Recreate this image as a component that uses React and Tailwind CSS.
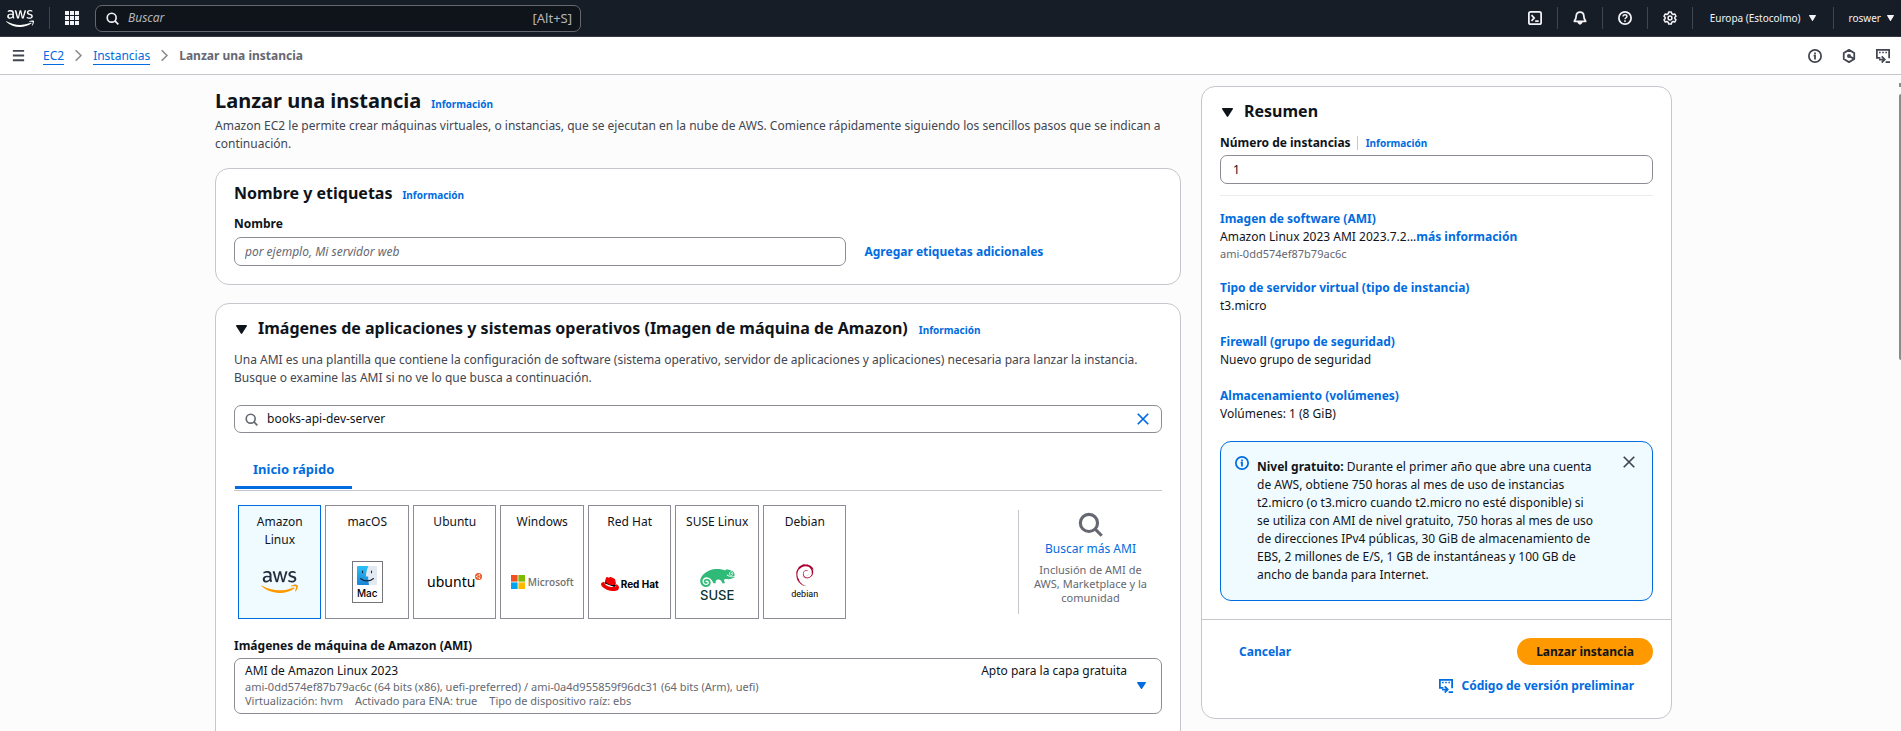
import React from "react";
import { FaAws, FaRedhat, FaSuse } from "react-icons/fa";
import { SiDebian } from "react-icons/si";

/* ---------- icons ---------- */

function Icon({ size = "size-[14px]", width = 2, children, className = "" }) {
  return (
    <svg
      viewBox="0 0 16 16"
      fill="none"
      stroke="currentColor"
      strokeWidth={width}
      aria-hidden="true"
      className={`${size} shrink-0 ${className}`}
    >
      {children}
    </svg>
  );
}

const SearchIcon = (props) => (
  <Icon {...props}>
    <circle cx="7" cy="7" r="5.5" />
    <path d="M11 11l4.2 4.2" />
  </Icon>
);

const CloseIcon = (props) => (
  <Icon {...props}>
    <path d="M2 2l12 12M14 2L2 14" />
  </Icon>
);

const InfoIcon = (props) => (
  <Icon {...props}>
    <circle cx="8" cy="8" r="7" />
    <path d="M6.500 7.500H8V12M8 6V4" />
  </Icon>
);

const ChevronIcon = (props) => (
  <Icon {...props}>
    <path d="M4.500 1.500L11 8l-6.500 6.500" />
  </Icon>
);

const MenuIcon = (props) => (
  <Icon {...props}>
    <path d="M2 3h12M2 8h12M2 13h12" />
  </Icon>
);

const TerminalIcon = (props) => (
  <Icon {...props}>
    <rect x="1" y="1" width="14" height="14" rx="2" />
    <path d="M4 4.8L7 8l-3 3.2M8.2 11.5h4" />
  </Icon>
);

const BellIcon = (props) => (
  <Icon {...props}>
    <path d="M8 1.2c-2.6 0-4.3 1.9-4.3 4.3 0 3-.7 4.3-2.2 6.3h13c-1.5-2-2.2-3.3-2.2-6.3 0-2.4-1.7-4.3-4.3-4.3z" strokeLinejoin="round" />
    <path d="M5.6 12.6c.2 1.600 1.100 2.400 2.400 2.400s2.200-.8 2.400-2.400z" fill="currentColor" strokeWidth="1" />
  </Icon>
);

const HelpIcon = (props) => (
  <Icon {...props}>
    <circle cx="8" cy="8" r="7" />
    <path d="M5.800 6.400c0-1.300 1-2.200 2.200-2.200s2.200.8 2.200 2c0 1.500-2.200 1.600-2.200 3.300M8 10.600v2" strokeWidth="1.700" />
  </Icon>
);

const GearIcon = (props) => (
  <Icon {...props}>
    <path
      d="M6.500 1.200h3l.5 1.900 1.500.9 1.900-.6 1.500 2.600L13.500 7.300v1.400l1.400 1.300-1.500 2.600-1.900-.6-1.500.9-.5 1.900h-3L6 12.900 4.500 12l-1.900.6L1.100 10l1.400-1.300V7.300L1.100 6l1.500-2.600 1.900.6L6 3.100z"
      strokeLinejoin="round"
      strokeWidth="1.700"
    />
    <circle cx="8" cy="8" r="2.200" strokeWidth="1.700" />
  </Icon>
);

const HexagonIcon = (props) => (
  <Icon {...props}>
    <path d="M8 1l6 3.500v7L8 15l-6-3.500v-7z" strokeLinejoin="round" />
    <circle cx="8" cy="8" r="1.300" />
    <path d="M9 8.600l4.500 2.400" />
  </Icon>
);

const ScriptIcon = (props) => (
  <Icon {...props}>
    <path d="M5 10H1V1h14v9.500" />
    <path d="M3.500 4h1.800M7.100 4h1.800M10.700 4h1.800" strokeWidth="1.600" />
    <path d="M3.500 12H9M6.500 8.500L10 12l-3.500 3.500M11 15h5" />
  </Icon>
);

function Caret({ className = "h-[9px] w-[11px]" }) {
  return (
    <svg viewBox="0 0 12 9" preserveAspectRatio="none" fill="currentColor" aria-hidden="true" className={`shrink-0 ${className}`}>
      <path d="M.8 0h10.400c.7 0 1 .7.6 1.200L6.700 8.600c-.3.5-1.100.5-1.400 0L.2 1.200C-.2.7.1 0 .8 0z" />
    </svg>
  );
}

const AppsIcon = () => (
  <svg viewBox="0 0 14 14" fill="currentColor" aria-hidden="true" className="size-[14px]">
    {[0, 5, 10].map((y) => [0, 5, 10].map((x) => <rect key={`${x}-${y}`} x={x} y={y} width="4" height="4" />))}
  </svg>
);

/* ---------- vendor logos ---------- */

const AmazonLogo = () => (
  <>
    <svg width="0" height="0" className="absolute" aria-hidden="true">
      <linearGradient id="aws-fill" gradientUnits="userSpaceOnUse" x1="0" y1="64" x2="0" y2="448">
        <stop offset=".64" stopColor="#232f3e" />
        <stop offset=".64" stopColor="#ff9900" />
      </linearGradient>
    </svg>
    <FaAws viewBox="0 64 640 384" fill="url(#aws-fill)" stroke="none" className="h-[22px] w-[37px]" />
  </>
);

const MacLogo = () => (
  <span className="flex h-[42px] w-[31px] flex-col items-center border border-[#75757a] bg-white pt-1">
    <svg viewBox="0 0 20 19" className="h-[19px] w-5" aria-hidden="true">
      <defs>
        <linearGradient id="mac-blue" x1="0" y1="0" x2="0" y2="1">
          <stop offset="0" stopColor="#2cc0f6" />
          <stop offset="1" stopColor="#1785d6" />
        </linearGradient>
      </defs>
      <rect width="20" height="19" rx="1" fill="#e3e8f1" />
      <path d="M1 0h10.500C9.800 3.500 9 6.800 8.900 10.500h2.300c-.1 3 .2 5.800.8 8.500H1a1 1 0 0 1-1-1V1a1 1 0 0 1 1-1z" fill="url(#mac-blue)" />
      <path d="M5.500 5v1.800M14.500 5v1.800M3.500 12.500c3.600 3.200 9.400 3.200 13 0" fill="none" stroke="#1b2a3c" strokeWidth="1.100" strokeLinecap="round" />
    </svg>
    <span className="font-['Inter',sans-serif] text-[10px] leading-[16px] font-medium text-black">Mac</span>
  </span>
);

const UbuntuLogo = () => (
  <span className="flex items-start">
    <span className="font-['Noto_Sans',sans-serif] text-[14px] leading-[18px] text-black">ubuntu</span>
    <svg viewBox="0 0 14 14" className="size-[7px]" aria-hidden="true">
      <circle cx="7" cy="7" r="7" fill="#e95420" />
      <circle cx="7" cy="7" r="3" fill="none" stroke="#fff" strokeWidth="1.300" />
      <circle cx="2.800" cy="7" r="1.200" fill="#fff" />
      <circle cx="9.200" cy="3.300" r="1.200" fill="#fff" />
      <circle cx="9.200" cy="10.700" r="1.200" fill="#fff" />
    </svg>
  </span>
);

const MicrosoftLogo = () => (
  <span className="flex items-center gap-[3px]">
    <svg viewBox="0 0 14 14" className="size-[14px] shrink-0" aria-hidden="true">
      <rect width="6.600" height="6.600" fill="#f25022" />
      <rect x="7.400" width="6.600" height="6.600" fill="#7fba00" />
      <rect y="7.400" width="6.600" height="6.600" fill="#00a4ef" />
      <rect x="7.400" y="7.400" width="6.600" height="6.600" fill="#ffb900" />
    </svg>
    <span className="font-['Open_Sans',sans-serif] text-[10px] leading-[14px] font-semibold text-[#737373]">Microsoft</span>
  </span>
);

const RedHatLogo = () => (
  <span className="flex items-center gap-[2px] pt-1">
    <span className="relative flex">
      <svg viewBox="0 0 18 14" className="absolute inset-0 h-[14px] w-[18px]" aria-hidden="true">
        <path d="M4 6l9.500 3.500 1-1.500L5 4.500z" fill="#000" stroke="#000" />
      </svg>
      <FaRedhat viewBox="0 64 512 384" preserveAspectRatio="none" className="relative h-[14px] w-[18px] text-[#ee0000]" />
    </span>
    <span className="font-['Inter',sans-serif] text-[10px] leading-[14px] font-bold text-black">Red Hat</span>
  </span>
);

const SuseLogo = () => (
  <span className="flex flex-col items-center pt-2">
    <FaSuse viewBox="0 96 640 320" preserveAspectRatio="none" className="h-[18px] w-[35px] text-[#30ba78]" />
    <span className="font-['Inter',sans-serif] text-[13px] leading-[16px] font-medium text-[#0c322c]">SUSE</span>
  </span>
);

const DebianLogo = () => (
  <span className="flex flex-col items-center gap-px">
    <SiDebian className="h-[22px] w-[22px] text-[#a80030]" />
    <span className="font-['Roboto',sans-serif] text-[9px] leading-[14px] text-black">debian</span>
  </span>
);

const SYSTEMS = [
  { name: "Amazon Linux", Logo: AmazonLogo, selected: true },
  { name: "macOS", Logo: MacLogo },
  { name: "Ubuntu", Logo: UbuntuLogo },
  { name: "Windows", Logo: MicrosoftLogo },
  { name: "Red Hat", Logo: RedHatLogo },
  { name: "SUSE Linux", Logo: SuseLogo },
  { name: "Debian", Logo: DebianLogo },
];

/* ---------- shared pieces ---------- */

const InfoLink = () => (
  <a href="#info" className="text-[10px] leading-[12px] font-bold text-[#006ce0]">
    Información
  </a>
);

const Divider = () => <span className="h-[22px] w-px bg-[#424650]" />;

function TopBar() {
  return (
    <header className="flex h-[37px] items-center border-b border-[#333843] bg-[#161d26] text-[#f3f3f7]">
      <a href="#home" aria-label="AWS" className="ml-[6px]">
        <FaAws viewBox="0 64 640 384" className="h-[17px] w-[28px] text-white" />
      </a>
      <div className="ml-[15px] flex items-center gap-[15px]">
        <Divider />
        <button type="button" aria-label="Servicios">
          <AppsIcon />
        </button>
      </div>
      <label className="ml-4 flex h-[27px] w-[486px] items-center gap-[9px] rounded-[7px] border border-[#656871] bg-[#0f141a] pr-2 pl-[10px]">
        <SearchIcon size="size-[13px]" />
        <input
          type="search"
          aria-label="Buscar"
          placeholder="Buscar"
          className="min-w-0 flex-1 bg-transparent text-[12px] italic outline-none placeholder:text-[#b4b4bb]"
        />
        <span className="text-[13px] text-[#b4b4bb]">[Alt+S]</span>
      </label>
      <nav className="ml-auto flex items-center gap-[15px]">
        <button type="button" aria-label="CloudShell"><TerminalIcon /></button>
        <Divider />
        <button type="button" aria-label="Notificaciones"><BellIcon /></button>
        <Divider />
        <button type="button" aria-label="Ayuda"><HelpIcon /></button>
        <Divider />
        <button type="button" aria-label="Configuración"><GearIcon /></button>
        <Divider />
        <button type="button" className="flex items-center gap-2 px-[2px] text-[10px]">
          Europa (Estocolmo)
          <Caret className="h-[6px] w-[7px]" />
        </button>
        <Divider />
        <button type="button" className="mr-[7px] flex items-center gap-[6px] text-[10px]">
          roswer
          <Caret className="h-[6px] w-[7px]" />
        </button>
      </nav>
    </header>
  );
}

function BreadcrumbBar() {
  return (
    <div className="flex h-[38px] items-center border-b border-[#c6c6cd] bg-white px-[11px]">
      <button type="button" aria-label="Menú" className="text-[#424650]">
        <MenuIcon size="size-[15px]" />
      </button>
      <nav aria-label="Ruta" className="ml-[17px] flex items-center gap-2 text-[12px]">
        <a href="#ec2" className="border-b border-[#006ce0] leading-[17px] text-[#006ce0]">EC2</a>
        <ChevronIcon size="size-[13px]" className="text-[#8c8c94]" />
        <a href="#instancias" className="border-b border-[#006ce0] leading-[17px] text-[#006ce0]">Instancias</a>
        <ChevronIcon size="size-[13px]" className="text-[#8c8c94]" />
        <span className="font-bold text-[#656871]">Lanzar una instancia</span>
      </nav>
      <div className="ml-auto flex gap-5 text-[#424650]">
        <button type="button" aria-label="Información"><InfoIcon /></button>
        <button type="button" aria-label="Tutoriales"><HexagonIcon /></button>
        <button type="button" aria-label="Código"><ScriptIcon /></button>
      </div>
    </div>
  );
}

function NameCard() {
  return (
    <section className="rounded-[14px] border border-[#c6c6cd] bg-white px-[18px] pt-[13px] pb-[18px]">
      <div className="flex items-baseline gap-[10px]">
        <h2 className="text-[16px] leading-[22px] font-bold">Nombre y etiquetas</h2>
        <InfoLink />
      </div>
      <label htmlFor="nombre" className="mt-[11px] mb-1 block font-bold">Nombre</label>
      <div className="flex items-center gap-[18px]">
        <input
          id="nombre"
          placeholder="por ejemplo, Mi servidor web"
          className="h-[29px] w-[66%] rounded-[7px] border border-[#8c8c94] px-[10px] outline-none placeholder:text-[#656871] placeholder:italic"
        />
        <button type="button" className="font-bold text-[#006ce0]">Agregar etiquetas adicionales</button>
      </div>
    </section>
  );
}

function ImagesCard() {
  return (
    <section className="rounded-[14px] border border-[#c6c6cd] bg-white px-[18px] pt-[13px] pb-[60px]">
      <div className="flex items-baseline gap-[11px] pl-[2px]">
        <button type="button" aria-label="Contraer sección" className="flex"><Caret /></button>
        <h2 className="text-[16px] leading-[22px] font-bold">
          Imágenes de aplicaciones y sistemas operativos (Imagen de máquina de Amazon)
        </h2>
        <InfoLink />
      </div>
      <p className="mt-3 text-[#424650]">
        Una AMI es una plantilla que contiene la configuración de software (sistema operativo, servidor de aplicaciones y
        aplicaciones) necesaria para lanzar la instancia. Busque o examine las AMI si no ve lo que busca a continuación.
      </p>
      <div className="mt-[18px] flex h-7 items-center gap-[9px] rounded-[7px] border border-[#8c8c94] pr-[11px] pl-[10px]">
        <SearchIcon size="size-[13px]" className="text-[#656871]" />
        <input
          type="text"
          aria-label="Buscar AMI"
          defaultValue="books-api-dev-server"
          className="min-w-0 flex-1 bg-transparent outline-none"
        />
        <button type="button" aria-label="Borrar" className="text-[#006ce0]">
          <CloseIcon />
        </button>
      </div>
      <div role="tablist" className="mt-5 flex border-b border-[#c6c6cd] pb-px pl-px">
        <button
          role="tab"
          type="button"
          aria-selected="true"
          className="border-b-[3px] border-[#006ce0] px-[18px] pt-[7px] pb-2 text-[13px] leading-[18px] font-bold text-[#006ce0]"
        >
          Inicio rápido
        </button>
      </div>
      <div className="mt-[14px] flex justify-between">
        <div className="grid w-[66%] grid-cols-7 gap-1 pl-1">
          {SYSTEMS.map(({ name, Logo, selected }) => (
            <button
              key={name}
              type="button"
              aria-pressed={!!selected}
              className={`relative flex h-[114px] flex-col items-center border px-1 pt-[7px] ${
                selected ? "border-[#006ce0] bg-[#f0fbff]" : "border-[#8c8c94] bg-white"
              }`}
            >
              <span className="flex h-9 w-[70px] items-start justify-center text-center">{name}</span>
              <span className="flex h-[66px] items-center justify-center">
                <Logo />
              </span>
            </button>
          ))}
        </div>
        <div className="my-[5px] flex w-[144px] flex-col items-center border-l border-[#c6c6cd] px-3 pt-[2px]">
          <SearchIcon size="size-[25px]" className="text-[#656871]" />
          <a href="#ami" className="mt-[3px] text-[#006ce0]">Buscar más AMI</a>
          <p className="mt-[5px] text-center text-[11px] leading-[14px] text-[#656871]">
            Inclusión de AMI de AWS, Marketplace y la comunidad
          </p>
        </div>
      </div>
      <label htmlFor="ami" className="mt-[18px] mb-[3px] block font-bold">Imágenes de máquina de Amazon (AMI)</label>
      <button
        id="ami"
        type="button"
        aria-haspopup="listbox"
        className="flex w-full items-center justify-between rounded-[7px] border border-[#8c8c94] pt-[3px] pr-[15px] pb-[5px] pl-[10px] text-left"
      >
        <span className="block flex-1">
          <span className="flex justify-between">
            <span>AMI de Amazon Linux 2023</span>
            <span>Apto para la capa gratuita</span>
          </span>
          <span className="block text-[11px] leading-[14px] text-[#656871]">
            ami-0dd574ef87b79ac6c (64 bits (x86), uefi-preferred) / ami-0a4d955859f96dc31 (64 bits (Arm), uefi)
          </span>
          <span className="flex gap-3 text-[11px] leading-[14px] text-[#656871]">
            <span>Virtualización: hvm</span>
            <span>Activado para ENA: true</span>
            <span>Tipo de dispositivo raíz: ebs</span>
          </span>
        </span>
        <Caret className="ml-[10px] h-[7px] w-[9px] text-[#006ce0]" />
      </button>
    </section>
  );
}

function SummaryItem({ title, children }) {
  return (
    <div>
      <a href="#detalle" className="font-bold text-[#006ce0]">{title}</a>
      {children}
    </div>
  );
}

function SummaryCard() {
  return (
    <aside className="mt-[11px] w-[471px] shrink-0 self-start rounded-[14px] border border-[#c6c6cd] bg-white">
      <div className="px-[18px] pt-[13px] pb-[18px]">
        <div className="flex items-baseline gap-[11px] pl-[2px]">
          <button type="button" aria-label="Contraer resumen" className="flex"><Caret /></button>
          <h2 className="text-[16px] leading-[22px] font-bold">Resumen</h2>
        </div>
        <div className="mt-3 mb-[3px] flex items-center">
          <label htmlFor="cantidad" className="mr-[6px] font-bold">Número de instancias</label>
          <span className="mr-2 h-[14px] w-px bg-[#c6c6cd]" />
          <InfoLink />
        </div>
        <input id="cantidad" defaultValue="1" className="h-[29px] w-full rounded-[7px] border border-[#8c8c94] px-3 outline-none" />
        <hr className="mt-[11px] mb-[14px] border-[#ebebf0]" />
        <div className="flex flex-col gap-[18px]">
          <SummaryItem title="Imagen de software (AMI)">
            <p>
              Amazon Linux 2023 AMI 2023.7.2...
              <a href="#mas" className="font-bold text-[#006ce0]">más información</a>
            </p>
            <p className="text-[11px] leading-[15px] text-[#656871]">ami-0dd574ef87b79ac6c</p>
          </SummaryItem>
          <SummaryItem title="Tipo de servidor virtual (tipo de instancia)">
            <p>t3.micro</p>
          </SummaryItem>
          <SummaryItem title="Firewall (grupo de seguridad)">
            <p>Nuevo grupo de seguridad</p>
          </SummaryItem>
          <SummaryItem title="Almacenamiento (volúmenes)">
            <p>Volúmenes: 1 (8 GiB)</p>
          </SummaryItem>
          <div className="flex rounded-[11px] border border-[#006ce0] bg-[#f0fbff] pr-4 pl-[14px]">
            <InfoIcon className="mt-[14px] text-[#006ce0]" />
            <p className="ml-2 w-[340px] pt-4 pb-4">
              <b>Nivel gratuito:</b> Durante el primer año que abre una cuenta de AWS, obtiene 750 horas al mes de uso de
              instancias t2.micro (o t3.micro cuando t2.micro no esté disponible) si se utiliza con AMI de nivel gratuito,
              750 horas al mes de uso de direcciones IPv4 públicas, 30 GiB de almacenamiento de EBS, 2 millones de E/S, 1 GB
              de instantáneas y 100 GB de ancho de banda para Internet.
            </p>
            <button type="button" aria-label="Cerrar" className="mt-[13px] ml-auto self-start text-[#424650]">
              <CloseIcon />
            </button>
          </div>
        </div>
      </div>
      <div className="border-t border-[#c6c6cd] px-[18px] pt-[18px] pb-[23px]">
        <div className="flex items-center justify-between pl-[19px]">
          <button type="button" className="font-bold text-[#006ce0]">Cancelar</button>
          <button type="button" className="h-[27px] rounded-full bg-[#ff9900] px-[19px] font-bold">Lanzar instancia</button>
        </div>
        <button type="button" className="mt-3 mr-[19px] ml-auto flex items-center gap-2 font-bold text-[#006ce0]">
          <ScriptIcon />
          Código de versión preliminar
        </button>
      </div>
    </aside>
  );
}

export default function App() {
  return (
    <div className="flex h-screen flex-col overflow-hidden bg-[#fcfcfd] font-['Noto_Sans',sans-serif] text-[12px] leading-[18px] text-[#0f141a]">
      <TopBar />
      <BreadcrumbBar />
      <div className="flex min-h-0 flex-1">
        <main className="mx-auto flex w-full max-w-[1457px] gap-5">
          <div className="min-w-0 flex-1 pt-3">
            <div className="flex items-baseline gap-[10px]">
              <h1 className="text-[20px] leading-[28px] font-bold">Lanzar una instancia</h1>
              <InfoLink />
            </div>
            <p className="mt-[2px] mb-[15px] text-[#424650]">
              Amazon EC2 le permite crear máquinas virtuales, o instancias, que se ejecutan en la nube de AWS. Comience
              rápidamente siguiendo los sencillos pasos que se indican a continuación.
            </p>
            <div className="flex flex-col gap-[18px]">
              <NameCard />
              <ImagesCard />
            </div>
          </div>
          <SummaryCard />
        </main>
        <div aria-hidden="true" className="flex w-[14px] flex-col items-end gap-[7px] pt-2">
          <span className="h-1 w-[2px] bg-[#8b8b8b]" />
          <span className="h-[266px] w-[2px] rounded-l bg-[#8b8b8b]" />
        </div>
      </div>
    </div>
  );
}
